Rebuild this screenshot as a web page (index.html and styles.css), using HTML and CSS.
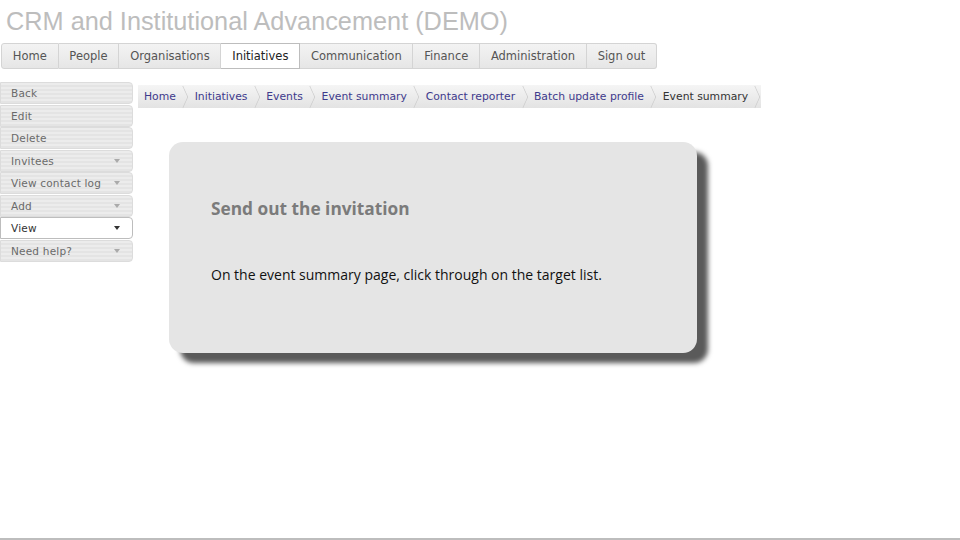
FILE: index.html
```html
<!DOCTYPE html>
<html>
<head>
<meta charset="utf-8">
<link rel="stylesheet" href="styles.css">
</head>
<body>
<div class="page">
  <h1 class="title">CRM and Institutional Advancement (DEMO)</h1>
  <nav class="topnav">
    <a class="tab">Home</a>
    <a class="tab">People</a>
    <a class="tab">Organisations</a>
    <a class="tab active">Initiatives</a>
    <a class="tab">Communication</a>
    <a class="tab">Finance</a>
    <a class="tab">Administration</a>
    <a class="tab">Sign out</a>
  </nav>
  <div class="body">
    <aside class="side">
      <div class="item">Back</div>
      <div class="item">Edit</div>
      <div class="item">Delete</div>
      <div class="item drop">Invitees<span class="arr"></span></div>
      <div class="item drop">View contact log<span class="arr"></span></div>
      <div class="item drop">Add<span class="arr"></span></div>
      <div class="item drop active">View<span class="arr"></span></div>
      <div class="item drop">Need help?<span class="arr"></span></div>
    </aside>
    <main class="main">
      <div class="crumbs">
        <span class="crumb">Home</span>
        <span class="crumb">Initiatives</span>
        <span class="crumb">Events</span>
        <span class="crumb">Event summary</span>
        <span class="crumb">Contact reporter</span>
        <span class="crumb">Batch update profile</span>
        <span class="crumb last">Event summary</span>
      </div>
      <section class="card">
        <h2 class="card-title">Send out the invitation</h2>
        <p class="card-text">On the event summary page, click through on the target list.</p>
      </section>
    </main>
  </div>
</div>
<div class="bottomline"></div>
</body>
</html>
```

FILE: styles.css
```css
* { box-sizing: border-box; }
html, body { margin: 0; padding: 0; background: #fff; }
body { width: 960px; height: 540px; position: relative; overflow: hidden; }
.title {
  margin: 0;
  padding: 7px 0 0 6px;
  height: 43px;
  font-family: "Liberation Sans", Arial, sans-serif;
  font-weight: normal;
  font-size: 25.3px;
  color: #bdbdbd;
  line-height: 29px;
}
.topnav {
  display: flex;
  margin-left: 1px;
  height: 26px;
}
.tab {
  display: flex;
  align-items: center;
  padding: 0 10.8px;
  font-family: "DejaVu Sans", Verdana, sans-serif;
  font-size: 11.5px;
  color: #555;
  white-space: nowrap;
  background: linear-gradient(#f3f3f3, #e6e6e6);
  border: 1px solid #d4d4d4;
  border-left: none;
}
.tab:first-child { border-left: 1px solid #d4d4d4; border-radius: 3px 0 0 3px; }
.tab:last-child { border-radius: 0 3px 3px 0; }
.tab.active { background: #fff; color: #222; border-color: #bdbdbd; }
.body {
  display: grid;
  grid-template-columns: 133px 1fr;
  margin-top: 13px;
}
.side { display: flex; flex-direction: column; gap: 0.5px; }
.item {
  height: 22px;
  display: flex;
  align-items: center;
  justify-content: space-between;
  padding: 0 10px 0 10px;
  font-family: "DejaVu Sans", Verdana, sans-serif;
  font-size: 10.5px;
  color: #6a6a6a;
  letter-spacing: 0.2px;
  background: repeating-linear-gradient(#ececec 0 2px, #e4e4e4 2px 4px);
  border: 1px solid #dcdcdc;
  border-radius: 0 4px 4px 0;
}
.item.active { background: #fff; color: #333; border-color: #bdbdbd; }
.arr {
  width: 0; height: 0;
  border-left: 3.5px solid transparent;
  border-right: 3.5px solid transparent;
  border-top: 4px solid #aaa;
  margin-right: 2px;
}
.item.active .arr { border-top-color: #333; }
.main { padding-left: 5px; padding-top: 3px; }
.crumbs {
  display: inline-flex;
  height: 23px;
  padding-right: 4px;
  background: linear-gradient(#f5f5f5, #e3e3e3);
}
.crumb {
  position: relative;
  display: flex;
  align-items: center;
  flex-shrink: 0;
  white-space: nowrap;
  padding: 0 9.4px 0 9.4px;
  font-family: "DejaVu Sans", Verdana, sans-serif;
  font-size: 10.8px;
  color: #3e3a8c;
}
.crumb:first-child { padding-left: 6px; }
.crumb::after {
  content: "";
  position: absolute;
  right: -6px;
  top: 4px;
  width: 15px;
  height: 15px;
  border-top: 1px solid #c8c8c8;
  border-right: 1px solid #c8c8c8;
  transform: scaleX(0.45) rotate(45deg);
  transform-origin: center;
}
.crumb.last { color: #333; }
.card {
  display: block;
  margin: 34px 0 0 31px;
  width: 528px;
  height: 211px;
  background: #e5e5e5;
  border-radius: 14px;
  box-shadow: 11px 10px 5px #5a5a5a;
  padding: 56px 0 0 42px;
}
.card-title {
  margin: 0;
  font-family: "Open Sans", sans-serif;
  font-weight: bold;
  font-size: 17.3px;
  line-height: 22px;
  color: #7b7b7b;
}
.card-text {
  margin: 46px 0 0 0;
  font-family: "Open Sans", sans-serif;
  font-size: 14px;
  line-height: 18px;
  color: #111;
}
.bottomline {
  position: absolute;
  left: 0; right: 0; bottom: 0;
  height: 2px;
  background: #bdbdbd;
}
```
